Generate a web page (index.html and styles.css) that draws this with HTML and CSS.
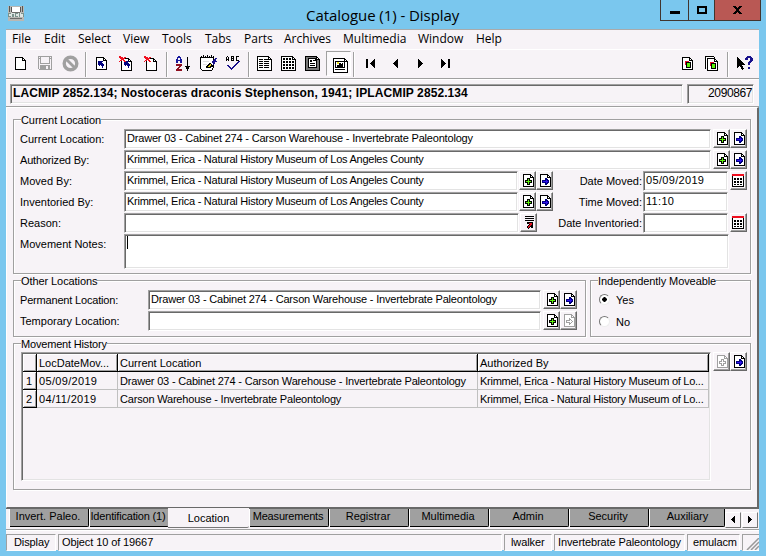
FILE: index.html
```html
<!DOCTYPE html>
<html lang="en">
<head>
<meta charset="utf-8">
<title>Catalogue (1) - Display</title>
<link rel="stylesheet" href="styles.css">
</head>
<body>
<svg class="defs" aria-hidden="true">
  <symbol id="doc" viewBox="0 0 11 13"><path d="M.5.5H7.5L10.5 3.5V12.5H.5Z" fill="#fff" stroke="currentColor"/><path d="M7.5 0V3.5H11" fill="none" stroke="currentColor"/></symbol>
  <symbol id="add" viewBox="0 0 11 13"><use href="#doc" width="11" height="13"/><path d="M4 4H7V6H9V9H7V11H4V9H2V6H4Z" fill="#000"/><path d="M5 5H6V7H8V8H6V10H5V8H3V7H5Z" fill="#5cf20c"/></symbol>
  <symbol id="go" viewBox="0 0 11 13"><use href="#doc" width="11" height="13"/><path d="M2 6H5V4H6L9 7V8L6 11H5V9H2Z" fill="#000080"/><path d="M3 7H8V8H3ZM6 6H7V9H6Z" fill="#3010f0"/></symbol>
  <symbol id="add-off" viewBox="0 0 11 13"><use href="#doc" width="11" height="13"/><path d="M4.500 4.500H6.500V6.500H8.500V8.500H6.500V10.500H4.500V8.500H2.500V6.500H4.500Z" fill="#fff" stroke="#a0a0a0"/></symbol>
  <symbol id="go-off" viewBox="0 0 11 13"><use href="#doc" width="11" height="13"/><path d="M2.500 6.500H5.500V4.500L8.500 7.500L5.500 10.500V8.500H2.500Z" fill="#fff" stroke="#a0a0a0"/></symbol>
  <symbol id="cal" viewBox="0 0 13 13"><path d="M0 0H12V13H0Z" fill="#000"/><path d="M0 0H12V2H0Z" fill="#f01020"/><path d="M1 2H11V12H1Z" fill="#fff"/><path d="M2 4h2v2h-2zM5 4h2v2h-2zM8 4h2v2h-2zM2 7h2v2h-2zM5 7h2v2h-2zM8 7h2v2h-2zM2 10h2v1h-2zM5 10h2v1h-2zM8 10h2v1h-2z" fill="#000"/></symbol>
  <symbol id="page" viewBox="0 0 16 15"><path d="M.5.5H11.500L14.500 3.500V14.500H.5Z" fill="#fff" stroke="#000"/><path d="M11.500 0V3.500H15" fill="none" stroke="#000"/></symbol>
</svg>
<div class="screen">
  <header class="title">
    <svg class="app" width="16" height="15" viewBox="0 0 16 15"><path d="M0 0H16V15H0Z" fill="#b9b8b4"/><path d="M4 1H12V7H4Z" fill="#fff"/><path d="M0 7H16V11H0Z" fill="#dfe6e3"/><path d="M1 0H2V6H1ZM3 1H4V6H3ZM12 1H13V6H12ZM14 0H15V6H14Z" fill="#565654"/><path d="M4 6H12V7H4ZM2 12H14V13H2Z" fill="#6c6c69"/><path d="M0 7h3v1H1v2h2v1H0zM4 8h2v3H4zM7 7h3v1H8v2h2v1H7zM11 7h1v4h-1zM13 7h3v4h-1V8h-2z" fill="#7b938c"/></svg>
    <h1>Catalogue (1) - Display</h1>
    <div class="controls"><span class="min"><i></i></span><span class="max"><i></i></span><span class="close"><svg width="9" height="8" viewBox="0 0 9 8"><path d="M0 0H3L4.500 2L6 0H9L6 4L9 8H6L4.500 6L3 8H0L3 4Z"/></svg></span></div>
  </header>
  <nav class="menu"><span class="m1">File</span><span class="m2">Edit</span><span class="m3">Select</span><span class="m4">View</span><span class="m5">Tools</span><span class="m6">Tabs</span><span class="m7">Parts</span><span class="m8">Archives</span><span class="m9">Multimedia</span><span class="m10">Window</span><span class="m11">Help</span></nav>
  <div class="toolbar">
    <span class="tool"><svg width="11" height="13"><use href="#doc"/></svg></span>
    <span class="tool"><svg width="15" height="15" viewBox="0 0 15 15"><path d="M0 0H14V14H1L0 13Z" fill="#a0a0a0"/><path d="M3 1H11V7H3ZM1 1h1v1H1zM12 1h1v1h-1z" fill="#f7f3f7"/><path d="M1 3h1v10H1zM12 3h1v10h-1zM2 8h10v1H2zM8 10h2v3H8z" fill="#f7f3f7"/></svg></span>
    <span class="tool"><svg class="smooth" width="17" height="17" viewBox="0 0 17 17"><circle cx="8.500" cy="8.500" r="6.300" fill="none" stroke="#a0a0a0" stroke-width="3.400"/><path d="M4 4L13 13" stroke="#a0a0a0" stroke-width="2.800"/></svg></span>
    <i class="sep s1"></i>
    <span class="tool"><svg width="11" height="13" viewBox="0 0 11 13"><use href="#doc" width="11" height="13"/><path d="M2 4H7V5H6V6H7V7H8V9H7V11H6V9H5V8H4V9H3V8H2Z" fill="#000080"/></svg></span>
    <span class="tool"><svg width="15" height="15" viewBox="0 0 15 15"><use href="#doc" x="2" y="2" width="11" height="13"/><path d="M5 5H10V6H9V7H10V8H11V10H10V12H9V10H8V9H7V10H6V9H5Z" fill="#000080"/><path d="M0 0H2V1H4V2H5V1H7V2H6V3H5V4H6V5H7V6H5V5H4V4H3V5H1V6H0V5H1V4H2V3H1V2H0Z" fill="#f01020"/></svg></span>
    <span class="tool"><svg width="15" height="15" viewBox="0 0 15 15"><use href="#doc" x="2" y="2" width="11" height="13"/><path d="M0 0H2V1H4V2H5V1H7V2H6V3H5V4H6V5H7V6H5V5H4V4H3V5H1V6H0V5H1V4H2V3H1V2H0Z" fill="#f01020"/></svg></span>
    <i class="sep"></i>
    <span class="tool"><svg width="17" height="15" viewBox="0 0 17 15"><path d="M3 0H5V1H6V3H7V7H5V5H3V7H1V3H2V1H3ZM3 2V4H5V2Z" fill="#18189c" fill-rule="evenodd"/><path d="M1 8H7V10H6V11H5V12H4V13H7V15H1V13H2V12H3V11H4V10H1Z" fill="#901020"/><path d="M12 1h1v9h2v1h-1v2h-1v2h-1v-2h-1v-2h-1v-1h2z" fill="#000"/></svg></span>
    <span class="tool"><svg width="17" height="17" viewBox="0 0 17 17"><path d="M.5 2.500H13.500V12.500L11.500 15.500H2.500L.5 13.500Z" fill="#fff" stroke="#000"/><path d="M1 1h1v2H1zM3 0h1v3H3zM5 1h1v2H5zM7 0h1v3H7zM9 1h1v2H9zM11 0h1v3h-1zM13 1h1v2h-1z" fill="#000"/><path d="M3 6h6v1H3zM3 9h4v1H3z" fill="#ddd"/><path d="M6 13V11H7V10H8V9H9V8H11V9H12V10H13V12H11V13Z" fill="#000"/><path d="M8 11H9V10H10V9H11V11H10V12H8Z" fill="#e0d020"/><path d="M12 8V6H13V5H14V4H15V3H17V4H16V6H17V7H15V9H14V10H13V8Z" fill="#18108c"/></svg></span>
    <span class="tool"><svg width="15" height="15" viewBox="0 0 15 15"><path d="M.5 5V1.500L1.500.5L2.500 1.500V5M0 3.500H3M5.500 0V4.500H7.500V.5H5M5.500 2.500H8M12.500.5H10.500V4.500H12.500" fill="none" stroke="#000"/><path d="M1 9H3V10H4V11H5V12H6V11H7V10H8V9H9V8H10V7H11V6H12V5H14V6H13V7H12V8H11V9H10V10H9V11H8V12H7V13H6V14H5V13H4V12H3V11H2V10H1Z" fill="#18108c"/></svg></span>
    <i class="sep s3"></i>
    <span class="tool"><svg width="15" height="15" viewBox="0 0 15 15"><use href="#page" width="16" height="15"/><path d="M2 3h4v1H2zM7 3h4v1H7zM2 5h4v1H2zM7 5h5v1H7zM2 7h4v1H2zM7 7h5v1H7zM2 9h4v1H2zM7 9h5v1H7zM2 11h4v1H2zM7 11h5v1H7z"/></svg></span>
    <span class="tool slim"><svg width="16" height="15" viewBox="0 0 16 15"><use href="#page" width="16" height="15"/><path d="M2 2h2v2H2zM5 2h2v2H5zM8 2h2v2H8zM2 5h2v2H2zM5 5h2v2H5zM8 5h2v2H8zM11 5h2v2h-2zM2 8h2v2H2zM5 8h2v2H5zM8 8h2v2H8zM11 8h2v2h-2zM2 11h2v2H2zM5 11h2v2H5zM8 11h2v2H8zM11 11h2v2h-2z"/></svg></span>
    <span class="tool slim"><svg width="16" height="15" viewBox="0 0 16 15"><use href="#page" width="16" height="15"/><path d="M1 1H11V4H14V14H1Z" fill="#777"/><path d="M3.500 2.500H10.500V4.500H11.500V11.500H3.500Z" fill="#fff" stroke="#000"/><path d="M5 4h2v2H5zM8 4h2v1H8zM5 7h5v1H5zM5 9h5v1H5z"/></svg></span>
    <span class="tool pressed"><svg width="16" height="15" viewBox="0 0 16 15"><use href="#page" width="16" height="15"/><path d="M2.500 3.500H11.500V9.500H2.500ZM2 11.500H12" fill="none" stroke="#000"/><path d="M4 7h2V5h2v1h1V5h1v4H4z"/><path d="M4 4h2v2H4z" fill="#eee420"/></svg></span>
    <i class="sep"></i>
    <span class="tool"><svg width="9" height="9" viewBox="0 0 9 9"><path d="M0 0H2V9H0ZM8 0H9V9H8V8H7V7H6V6H5V5H4V4H5V3H6V2H7V1H8Z"/></svg></span>
    <span class="tool"><svg width="5" height="9" viewBox="0 0 5 9"><path d="M4 0H5V9H4V8H3V7H2V6H1V5H0V4H1V3H2V2H3V1H4Z"/></svg></span>
    <span class="tool"><svg width="5" height="9" viewBox="0 0 5 9"><path d="M1 0H0V9H1V8H2V7H3V6H4V5H5V4H4V3H3V2H2V1H1Z"/></svg></span>
    <span class="tool"><svg width="9" height="9" viewBox="0 0 9 9"><path d="M1 0H0V9H1V8H2V7H3V6H4V5H5V4H4V3H3V2H2V1H1ZM7 0H9V9H7Z"/></svg></span>
    <span class="tool first-right"><svg width="11" height="13" viewBox="0 0 11 13"><use href="#doc" width="11" height="13"/><path d="M3 4H7V8H3Z" fill="#e01030"/><path d="M4.500 5.500H8.500V10.500H4.500Z" fill="#5cf20c" stroke="#000"/></svg></span>
    <span class="tool"><svg width="15" height="15" viewBox="0 0 15 15"><path d="M.5 12.500V.5H8.500L10 2" fill="#fff" stroke="#000"/><use href="#doc" x="2" y="2" width="11" height="13"/><path d="M5 6H9V10H5Z" fill="#e01030"/><path d="M6.500 7.500H10.500V12.500H6.500Z" fill="#5cf20c" stroke="#000"/></svg></span>
    <i class="sep s5"></i>
    <span class="tool help"><svg width="17" height="15" viewBox="0 0 17 15"><path d="M0 1L8 9H5L7 13L5 14L3 10L0 12Z"/><path d="M8 2H9V1H10V0H14V1H15V2H16V5H15V6H14V7H13V9H11V6H12V5H13V2H11V4H8ZM11 11H13V13H11Z" fill="#18108c"/></svg></span>
  </div>
  <div class="record"><div class="sunk name">LACMIP 2852.134; Nostoceras draconis Stephenson, 1941; IPLACMIP 2852.134</div><div class="sunk id">2090867</div></div>
  <main>
    <section class="group current">
      <h2>Current Location</h2>
      <div class="row"><label>Current Location:</label><div class="field w1 drawer">Drawer 03 - Cabinet 274 - Carson Warehouse - Invertebrate Paleontology</div><b class="btn"><svg width="11" height="13"><use href="#add"/></svg></b><b class="btn"><svg width="11" height="13"><use href="#go"/></svg></b></div>
      <div class="row"><label class="tight">Authorized By:</label><div class="field w1 person">Krimmel, Erica - Natural History Museum of Los Angeles County</div><b class="btn"><svg width="11" height="13"><use href="#add"/></svg></b><b class="btn"><svg width="11" height="13"><use href="#go"/></svg></b></div>
      <div class="row"><label>Moved By:</label><div class="field w2 person">Krimmel, Erica - Natural History Museum of Los Angeles County</div><b class="btn"><svg width="11" height="13"><use href="#add"/></svg></b><b class="btn"><svg width="11" height="13"><use href="#go"/></svg></b><label class="right">Date Moved:</label><div class="field w3 num">05/09/2019</div><b class="btn cal"><svg width="13" height="13"><use href="#cal"/></svg></b></div>
      <div class="row"><label>Inventoried By:</label><div class="field w2 person">Krimmel, Erica - Natural History Museum of Los Angeles County</div><b class="btn"><svg width="11" height="13"><use href="#add"/></svg></b><b class="btn"><svg width="11" height="13"><use href="#go"/></svg></b><label class="right">Time Moved:</label><div class="field w3 num">11:10</div></div>
      <div class="row"><label>Reason:</label><div class="field w2 reason"></div><b class="btn"><svg width="11" height="13" viewBox="0 0 11 13"><path d="M1 0H10V1H1ZM1 2H10V3H1ZM1 4H10V5H1Z"/><path d="M3 6H9V12H7V10L4 13L2 11L5 8H3Z"/><path d="M4 7H8V10L7 9L4 12L3 11L6 8Z" fill="#e01020"/></svg></b><label class="right after-one">Date Inventoried:</label><div class="field w3"></div><b class="btn cal"><svg width="13" height="13"><use href="#cal"/></svg></b></div>
      <div class="row notes"><label>Movement Notes:</label><div class="field"><i class="caret"></i></div></div>
    </section>
    <div class="pair">
      <section class="group other">
        <h2>Other Locations</h2>
        <div class="row"><label class="tight">Permanent Location:</label><div class="field drawer">Drawer 03 - Cabinet 274 - Carson Warehouse - Invertebrate Paleontology</div><b class="btn"><svg width="11" height="13"><use href="#add"/></svg></b><b class="btn"><svg width="11" height="13"><use href="#go"/></svg></b></div>
        <div class="row"><label>Temporary Location:</label><div class="field"></div><b class="btn"><svg width="11" height="13"><use href="#add"/></svg></b><b class="btn off"><svg width="11" height="13"><use href="#go-off"/></svg></b></div>
      </section>
      <section class="group moveable">
        <h2>Independently Moveable</h2>
        <div class="option"><i class="radio on"></i>Yes</div>
        <div class="option"><i class="radio"></i>No</div>
      </section>
    </div>
    <section class="group history">
      <h2 class="tight">Movement History</h2>
      <div class="history-body">
        <div class="table">
          <div class="tr head"><span></span><span>LocDateMov...</span><span>Current Location</span><span>Authorized By</span></div>
          <div class="tr"><span>1</span><span class="num">05/09/2019</span><span class="drawer">Drawer 03 - Cabinet 274 - Carson Warehouse - Invertebrate Paleontology</span><span class="person">Krimmel, Erica - Natural History Museum of Lo...</span></div>
          <div class="tr"><span>2</span><span class="num">04/11/2019</span><span class="drawer">Carson Warehouse - Invertebrate Paleontology</span><span class="person">Krimmel, Erica - Natural History Museum of Lo...</span></div>
        </div>
        <b class="btn off"><svg width="11" height="13"><use href="#add-off"/></svg></b><b class="btn"><svg width="11" height="13"><use href="#go"/></svg></b>
      </div>
    </section>
  </main>
  <nav class="tabs"><span>Invert. Paleo.</span><span class="tight">Identification (1)</span><span class="active">Location</span><span class="tight">Measurements</span><span>Registrar</span><span>Multimedia</span><span>Admin</span><span>Security</span><span class="last">Auxiliary</span><b class="arrow"><svg width="4" height="8" viewBox="0 0 4 8"><path d="M4 0V7H3V6H2V5H1V4H0V3H1V2H2V1H3V0Z"/></svg></b><b class="arrow"><svg width="4" height="8" viewBox="0 0 4 8"><path d="M0 0V7H1V6H2V5H3V4H4V3H3V2H2V1H1V0Z"/></svg></b></nav>
  <footer><span class="s-mode">Display</span><span class="s-count">Object 10 of 19667</span><span class="s-user">lwalker</span><span class="s-dept">Invertebrate Paleontology</span><span class="s-db">emulacm</span><span class="grip"><svg class="smooth" width="13" height="12" viewBox="0 0 13 12"><path d="M1 12L13 0M5 12L13 4M9 12L13 8" stroke="#999" stroke-width="1.500"/></svg></span></footer>
</div>
</body>
</html>
```
FILE: styles.css
```css
* { box-sizing: border-box; }
body { margin: 0; width: 766px; height: 556px; overflow: hidden; background: #7ac7ee; color: #000; font: 11px/14px "Liberation Sans", sans-serif; }
svg { display: block; flex: none; shape-rendering: crispEdges; }
svg.smooth { shape-rendering: auto; }
.defs { position: absolute; width: 0; height: 0; }
.screen { width: 766px; height: 556px; padding: 0 7px 6px 6px; display: grid; grid-template-rows: 29px 21px 29px 28px 401px 21px 21px; }
.title { display: flex; align-items: flex-start; }
.app { margin: 6px 0 0 2px; }
h1 { margin: 4px 0 0 282px; width: 160px; font: 15px/22px "Open Sans", sans-serif; white-space: nowrap; letter-spacing: -.06px; }
.controls { margin: 0 -2px 0 auto; display: flex; height: 21px; border: 1px solid #41352e; border-top: 0; }
.controls span { display: flex; align-items: center; justify-content: center; border-right: 1px solid #41352e; }
.min { width: 28px; } .max { width: 26px; }
.controls .close { width: 45px; background: #b95854; border: 0; }
.min i { width: 10px; height: 3px; background: #000; margin-top: 5px; }
.max i { width: 10px; height: 8px; border: 2px solid #000; }
.menu { background: #f7f3f7; border-top: 1px solid #aaa; border-bottom: 1px solid #fff; display: flex; padding-left: 6px; font: 12px/18px "Open Sans", sans-serif; white-space: nowrap; }
.menu span { flex: none; }
.m1 { width: 32px; } .m2 { width: 34px; } .m3 { width: 45px; } .m4 { width: 39px; } .m5 { width: 43px; } .m6 { width: 39px; } .m7 { width: 40px; } .m8 { width: 59px; } .m9 { width: 75px; } .m10 { width: 58px; }
.toolbar, .record, main, .tabs, footer { background: #f7f3f7; }
.toolbar { display: flex; border-bottom: 1px solid #a0a0a0; padding-left: 2px; }
.tool { width: 25px; height: 27px; display: flex; align-items: center; justify-content: center; flex: none; }
.slim { width: 24px; }
.pressed { width: 25px; height: 25px; margin: 1px 0 0 1px; padding: 4px 0 0 5px; background: #fbf9fb; border: 1px solid #a0a0a0; border-right-color: #fff; border-bottom-color: #fff; }
.sep { width: 2px; height: 25px; margin: 2px 3px 0 2px; background: #a0a0a0; border-right: 1px solid #fff; flex: none; }
.s1, .s3 { margin-right: 2px; }
.s5 { margin-right: 4px; }
.first-right { margin-left: auto; }
.help { margin-right: 1px; }
.record { display: flex; padding: 4px 5px 3px 4px; gap: 4px; border-top: 1px solid #fff; border-bottom: 1px solid #a0a0a0; }
.sunk { height: 20px; border: 1px solid; border-color: #a0a0a0 #fff #fff #a0a0a0; box-shadow: inset 1px 1px #696969, inset -1px -1px #e3e3e3; padding: 1px 3px 0 2px; white-space: nowrap; font-size: 12px; }
.name { flex: 1; font-weight: bold; letter-spacing: .09px; }
.id { width: 67px; text-align: right; padding-right: 1px; letter-spacing: -.4px; }
main { border-right: 2px solid #696969; border-left: 1px solid #fff; border-top: 1px solid #fff; border-bottom: 1px solid #696969; padding: 11px 6px 0 6px; }
.group { position: relative; border: 1px solid #a0a0a0; box-shadow: 1px 1px #fff, inset 1px 1px #fff; }
h2 { position: absolute; left: 7px; top: -6px; margin: 0; background: #f7f3f7; font: inherit; line-height: 13px; white-space: nowrap; letter-spacing: -.08px; }
.drawer { letter-spacing: -.19px; }
.person { letter-spacing: -.26px; }
.num { letter-spacing: .32px; }
.tight { letter-spacing: -.18px; }
.current { height: 155px; padding: 9px 0 0 6px; }
.row { display: flex; height: 21px; }
.row label { width: 104px; padding-top: 3px; flex: none; white-space: nowrap; }
.field { height: 20px; flex: none; background: #fff; border: 1px solid; border-color: #a0a0a0 #fff #fff #a0a0a0; box-shadow: inset 1px 1px #696969, inset -1px -1px #e3e3e3; padding: 1px 2px 0; white-space: nowrap; margin-right: 2px; }
.w1 { width: 587px; } .w2 { width: 394px; } .w3 { width: 85px; }
.w2 + .btn { margin-left: -1px; }
.btn + .right { margin-left: 1px; }
.reason { width: 395px; }
.row label.right { width: 89px; text-align: right; padding-right: 1px; }
.row label.after-one { width: 105px; }
.btn { width: 17px; height: 19px; flex: none; display: flex; align-items: center; justify-content: center; background: #f7f3f7; border: 1px solid; border-color: #fff #696969 #696969 #fff; box-shadow: inset -1px -1px #a0a0a0; color: #000; padding-left: 2px; }
.cal { padding-left: 0; }
.off { color: #a0a0a0; }
.notes .field { width: 605px; height: 35px; }
.caret { display: block; width: 1px; height: 13px; background: #000; }
.pair { display: flex; gap: 4px; margin-top: 6px; height: 57px; }
.other { width: 573px; padding: 9px 0 0 6px; }
.other .row label { width: 128px; }
.other .field { width: 393px; }
.moveable { flex: 1; padding: 8px 0 0 8px; }
.option { height: 22px; display: flex; align-items: center; gap: 6px; }
.radio { width: 11px; height: 11px; border: 1px solid; border-color: #777 #eee #eee #777; border-radius: 50%; background: #fff; margin-top: -2px; }
.on { background: radial-gradient(circle, #000 0 2px, #fff 2.500px); }
.history { height: 147px; margin-top: 6px; padding: 8px 0 0 7px; }
.history-body { display: flex; }
.table { width: 690px; height: 129px; margin-right: 2px; border: 1px solid; border-color: #a0a0a0 #fff #fff #a0a0a0; box-shadow: inset 1px 1px #696969, inset -1px -1px #e3e3e3; padding: 1px; }
.tr { display: grid; grid-template-columns: 14px 81px 360px 231px; height: 18px; }
.tr span { border-right: 1px solid #c0c0c0; border-bottom: 1px solid #c0c0c0; padding: 2px 0 0 2px; white-space: nowrap; }
.tr span:first-child { border-color: #000; box-shadow: inset 1px 1px #fff, inset -1px -1px #a0a0a0; padding-left: 3px; }
.tr.head span { border-color: #000; box-shadow: inset 1px 1px #fff, inset -1px -1px #a0a0a0; }
.tabs { display: flex; border-top: 1px solid #696969; align-items: flex-start; padding-left: 4px; }
.tabs span { width: 79px; height: 18px; margin-right: 1px; background: #a0a0a0; border-right: 1px solid #000; border-bottom: 1px solid #000; box-shadow: -1px 0 #fff; border-bottom-right-radius: 2px; text-align: center; padding: 0 2px 0 0; flex: none; white-space: nowrap; }
.tabs .active { background: #f7f3f7; border: 0; border-bottom: 1px solid #777; width: 81px; height: 20px; margin: -1px 1px 0 -2px; padding: 3px 0 0; box-shadow: none; }
.tabs .last { width: 75px; margin-right: 0; padding-left: 3px; }
.arrow { width: 16px; height: 16px; flex: none; margin: 3px 1px 0 0; display: flex; align-items: center; justify-content: center; background: #f7f3f7; border: 1px solid; border-color: #fff #777 #777 #fff; }
footer { display: flex; gap: 2px; padding-top: 4px; border-top: 1px solid #a0a0a0; box-shadow: inset 0 1px #fff; }
footer span { height: 17px; border: 1px solid; border-color: #a0a0a0 #fff #fff #a0a0a0; padding: 0 3px 0; white-space: nowrap; flex: none; letter-spacing: -.1px; }
.s-mode { width: 50px; padding-left: 7px; } .s-count { width: 444px; } .s-user { width: 48px; padding-left: 6px; } .s-dept { width: 131px; } .s-db { width: 53px; padding-left: 5px; }
footer .grip { width: 17px; padding: 3px 0 0 3px; border-right: 0; }
```
